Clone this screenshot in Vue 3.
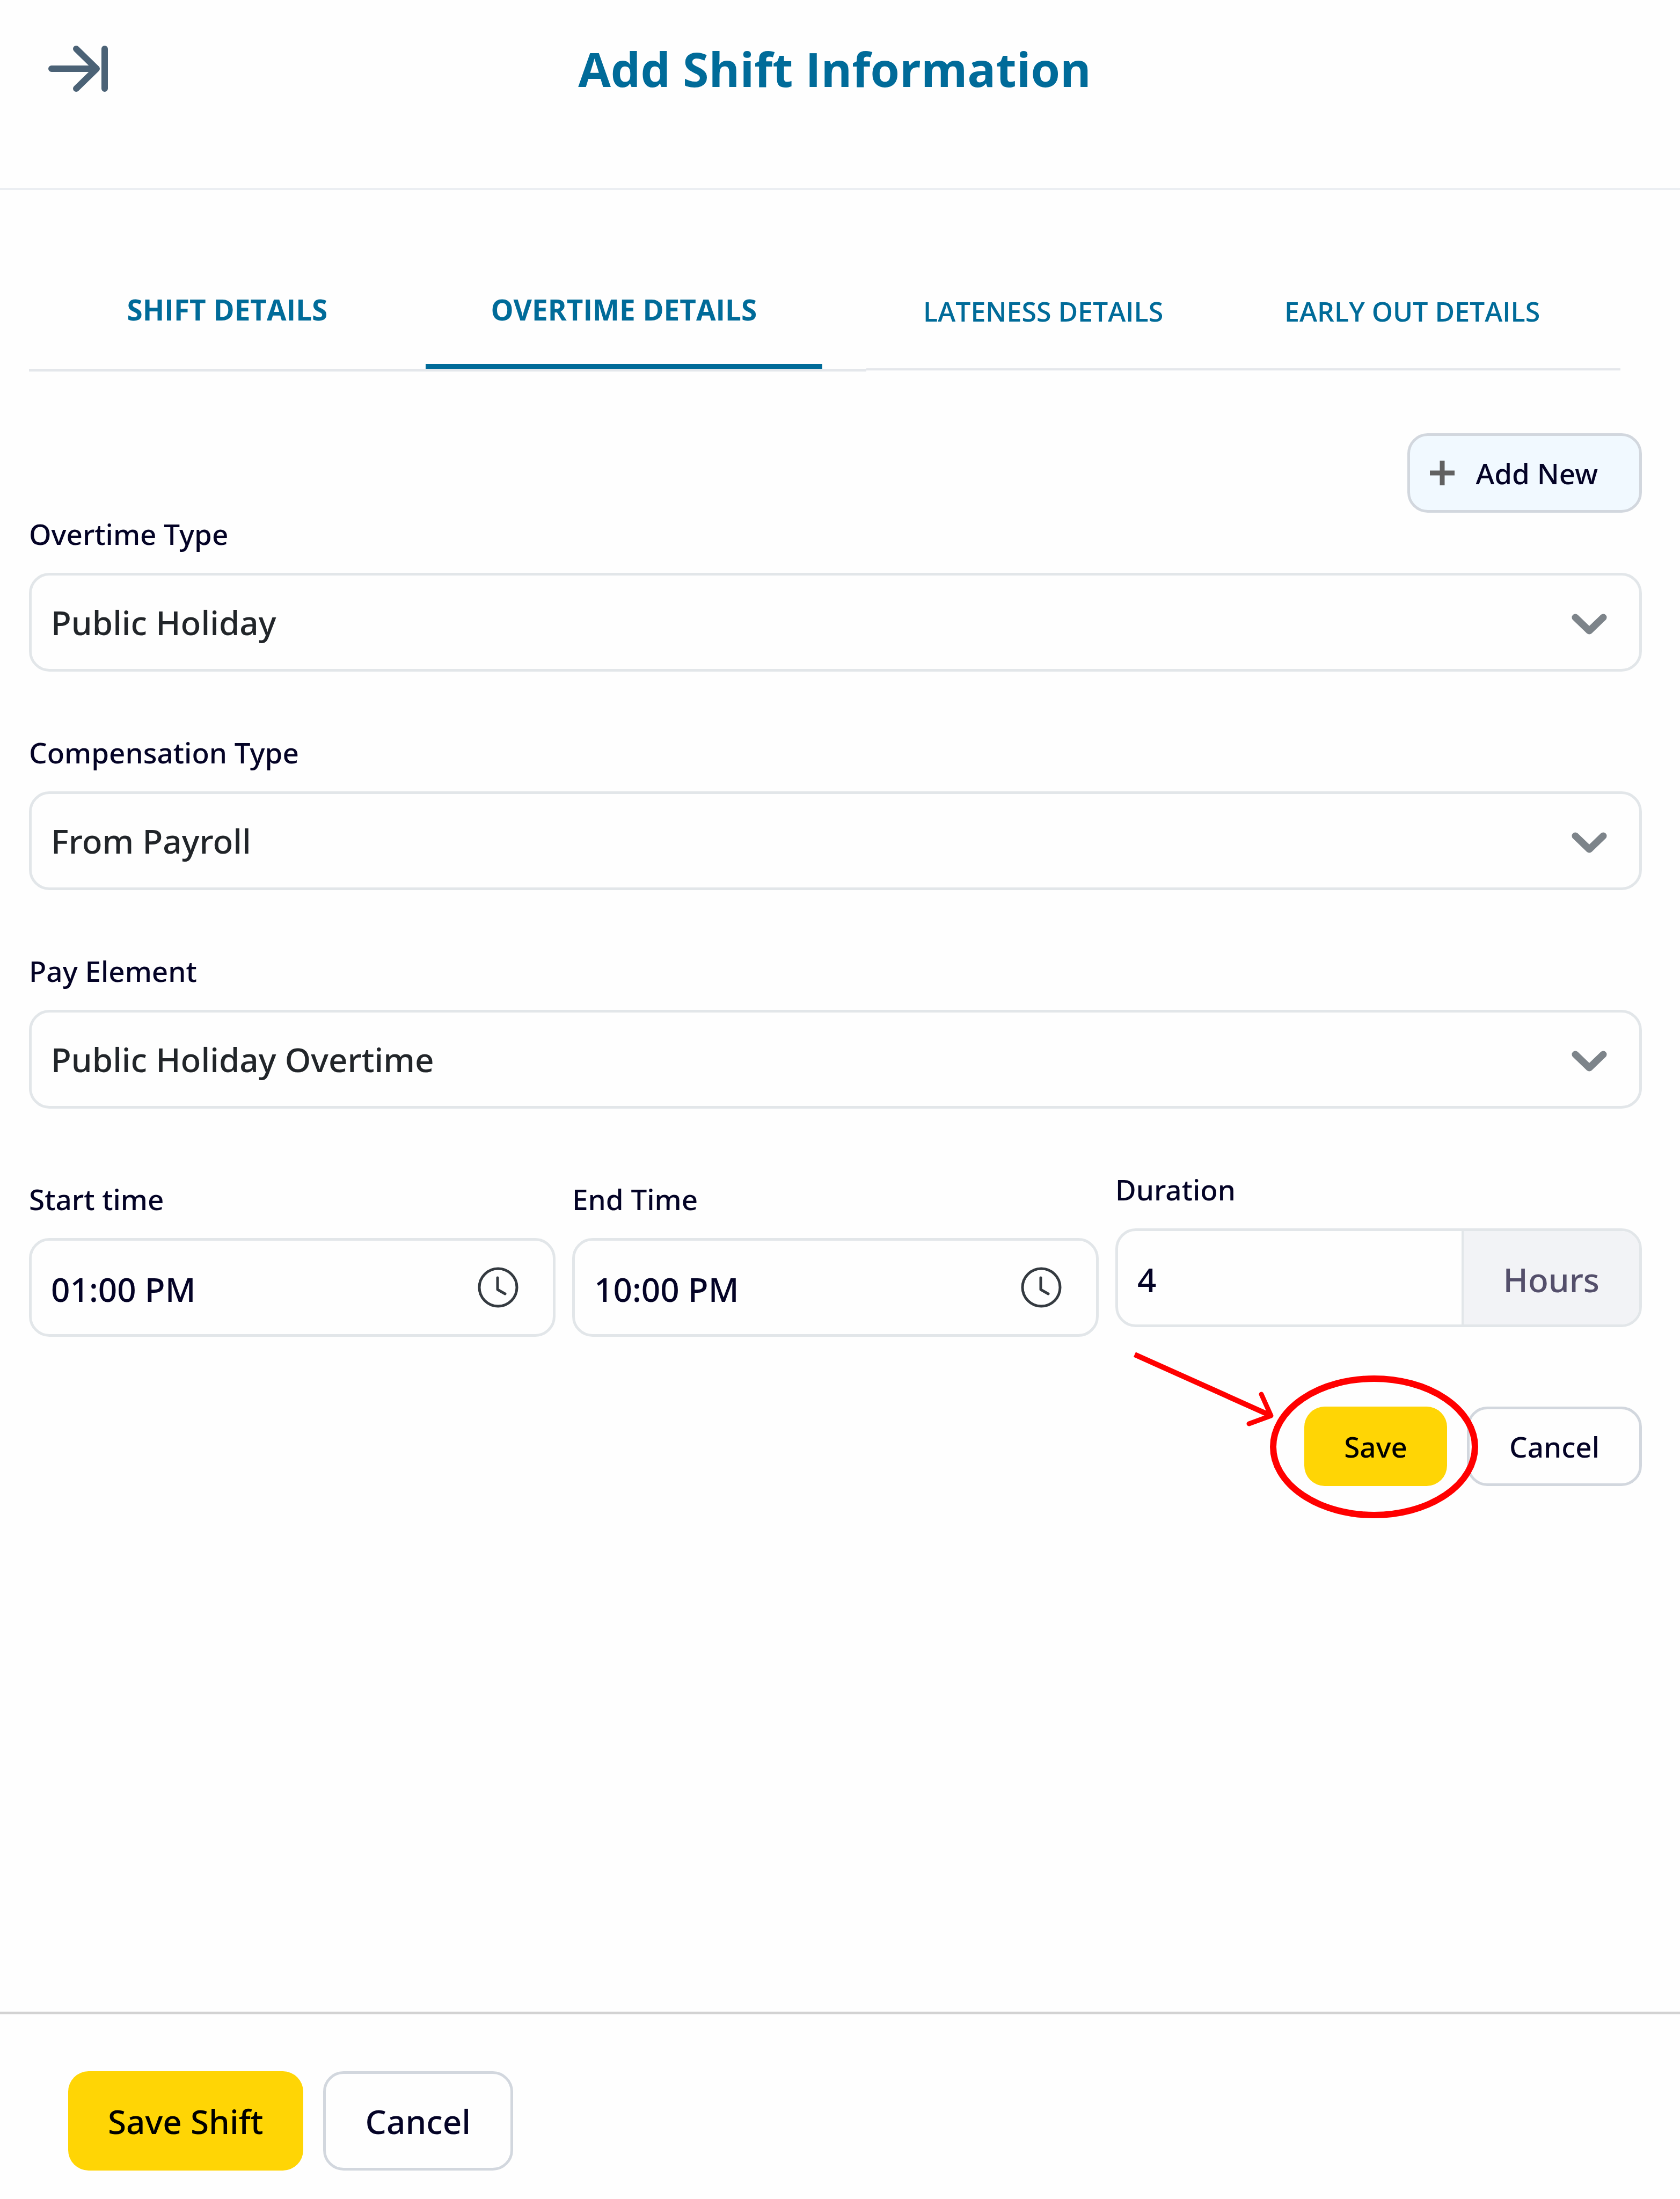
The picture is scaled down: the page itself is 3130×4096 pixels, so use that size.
<script setup>
import { ref } from 'vue'

const fields = ref([
  { id: 'overtime-type', label: 'Overtime Type', value: 'Public Holiday' },
  { id: 'compensation-type', label: 'Compensation Type', value: 'From Payroll' },
  { id: 'pay-element', label: 'Pay Element', value: 'Public Holiday Overtime' },
])
const times = ref([
  { id: 'start-time', label: 'Start time', value: '01:00 PM' },
  { id: 'end-time', label: 'End Time', value: '10:00 PM' },
])
const duration = ref('4')
const mainTabs = ['SHIFT DETAILS', 'OVERTIME DETAILS']
const moreTabs = ['LATENESS DETAILS', 'EARLY OUT DETAILS']
const active = ref('OVERTIME DETAILS')
</script>

<template>
  <div class="panel">
    <header class="header">
      <button class="collapse" type="button" aria-label="Close panel">
        <svg width="112" height="88" viewBox="0 0 112 88" fill="none" stroke="#4b6276" stroke-width="12" stroke-linecap="round" stroke-linejoin="round">
          <path d="M6 44H89M52 7L90 44L52 81M105 7V81" />
        </svg>
      </button>
      <h1 class="title">Add Shift Information</h1>
    </header>

    <nav class="tabs">
      <div class="tab-group">
        <button v-for="t in mainTabs" :key="t" type="button" class="tab" :class="{ active: t === active }" @click="active = t">{{ t }}</button>
      </div>
      <div class="tab-group more">
        <button v-for="t in moreTabs" :key="t" type="button" class="tab" :class="{ active: t === active }" @click="active = t">{{ t }}</button>
      </div>
    </nav>

    <main class="content">
      <div class="toolbar">
        <button class="btn add" type="button">
          <svg width="46" height="46" viewBox="0 0 46 46" stroke="#616161" stroke-width="9"><path d="M0 23H46M23 0V46" /></svg>
          Add New
        </button>
      </div>

      <form class="form" @submit.prevent>
        <div v-for="f in fields" :key="f.id" class="field">
          <label :for="f.id">{{ f.label }}</label>
          <div class="box">
            <select :id="f.id" v-model="f.value">
              <option>{{ f.value }}</option>
            </select>
            <svg class="chevron" width="66" height="48" viewBox="0 0 66 48" fill="none" stroke="#7d848a" stroke-width="13" stroke-linecap="round" stroke-linejoin="round">
              <path d="M7 15L33 40L59 15" />
            </svg>
          </div>
        </div>

        <div class="row">
          <div v-for="t in times" :key="t.id" class="field time">
            <label :for="t.id">{{ t.label }}</label>
            <div class="box">
              <input :id="t.id" v-model="t.value" type="text" />
              <svg class="clock" width="76" height="76" viewBox="0 0 76 76" fill="none" stroke="#343a40" stroke-width="5" stroke-linecap="round" stroke-linejoin="round">
                <circle cx="38" cy="38" r="35" />
                <path d="M37 20V42L51 50" />
              </svg>
            </div>
          </div>
          <div class="field">
            <label for="duration">Duration</label>
            <div class="box">
              <input id="duration" v-model="duration" type="text" />
              <span class="unit">Hours</span>
            </div>
          </div>
        </div>

        <div class="actions">
          <div class="callout">
            <button class="btn primary" type="submit">Save</button>
            <svg class="mark" width="660" height="330" viewBox="0 0 660 330" fill="none" stroke="#ff0000" aria-hidden="true">
              <path d="M8 12L262 126" stroke-width="10" />
              <path d="M244 86L262 126L221 141" stroke-width="9" stroke-linecap="round" stroke-linejoin="round" />
              <ellipse cx="454" cy="184" rx="188" ry="127" stroke-width="12" />
            </svg>
          </div>
          <button class="btn" type="button">Cancel</button>
        </div>
      </form>
    </main>

    <footer class="footer">
      <button class="btn large primary" type="button">Save Shift</button>
      <button class="btn large" type="button">Cancel</button>
    </footer>
  </div>
</template>

<style>
body {
  margin: 0;
  background: #fefefe;
}
</style>

<style scoped>
.panel,
.panel * {
  box-sizing: border-box;
}
.panel {
  display: flex;
  flex-direction: column;
  min-height: 100vh;
  font-family: "Noto Sans", "Open Sans", sans-serif;
  font-weight: 500;
  color: #040326;
}
svg {
  display: block;
  flex: none;
}
button,
input,
select {
  font: inherit;
  color: inherit;
  margin: 0;
  padding: 0;
  border: 0;
  background: none;
}
.header {
  display: grid;
  grid-template-columns: 1fr auto 1fr;
  align-items: center;
  padding: 64px 110px 158px 90px;
  border-bottom: 4px solid #ebeef2;
}
.collapse {
  justify-self: start;
}
.title {
  margin: 0;
  font-family: "Open Sans", "Noto Sans", sans-serif;
  font-size: 88px;
  line-height: 128px;
  font-weight: 700;
  color: #006b99;
}
.tabs {
  display: grid;
  grid-template-columns: minmax(0, 111fr) minmax(0, 100fr);
  align-items: start;
  padding: 0 111px 0 54px;
  font-family: "Open Sans", "Noto Sans", sans-serif;
}
.tab-group {
  display: flex;
  padding: 195px 82px 0 0;
  border-bottom: 5px solid #e4e7eb;
}
.tab {
  flex: 1 1 0;
  padding-bottom: 73px;
  border-bottom: 9px solid transparent;
  font-size: 53px;
  line-height: 56px;
  font-weight: 700;
  color: #006b99;
  white-space: nowrap;
}
.tab.active {
  border-bottom-color: #006b99;
}
.more {
  gap: 28px;
  padding: 198px 58px 0 0;
  border-bottom-width: 4px;
}
.more .tab {
  padding-bottom: 69px;
  font-size: 50px;
  font-weight: 600;
}
.content {
  padding: 115px 71px 0 54px;
}
.toolbar,
.actions {
  display: flex;
  justify-content: flex-end;
  gap: 37px;
}
.form {
  display: flex;
  flex-direction: column;
  gap: 111px;
}
.field label {
  display: block;
  margin-bottom: 32px;
  font-size: 53px;
  line-height: 80px;
}
.box {
  position: relative;
  display: flex;
  align-items: center;
  height: 184px;
  border: 5px solid #e2e6e9;
  border-radius: 38px;
  overflow: hidden;
  font-size: 62px;
}
.box select,
.box input {
  flex: 1;
  width: 100%;
  min-width: 0;
  height: 100%;
  padding: 0 36px;
  appearance: none;
  outline: none;
}
.box input {
  padding-top: 6px;
}
.box select {
  color: #212529;
}
.chevron {
  position: absolute;
  right: 60px;
  pointer-events: none;
}
.clock {
  margin-right: 64px;
}
.row {
  display: grid;
  grid-template-columns: repeat(3, 1fr);
  gap: 31px;
}
.time {
  padding-top: 18px;
}
.unit {
  display: flex;
  align-items: center;
  height: 100%;
  padding: 6px 74px 0;
  border-left: 4px solid #e2e6e9;
  background: #f2f3f6;
  color: #544f6b;
}
.actions {
  margin-top: 19px;
}
.btn {
  display: flex;
  align-items: center;
  justify-content: center;
  height: 148px;
  padding: 0 74px;
  border: 5px solid #d2d7de;
  border-radius: 38px;
  font-size: 53px;
  white-space: nowrap;
}
.primary {
  border: 0;
  background: #ffd505;
  color: #000;
}
.add {
  gap: 40px;
  padding: 0 77px 0 37px;
  background: #f1f9ff;
}
.callout {
  position: relative;
}
.mark {
  position: absolute;
  left: -324px;
  top: -109px;
  pointer-events: none;
}
.footer {
  display: flex;
  gap: 37px;
  margin-top: auto;
  padding: 106px 127px 53px;
  border-top: 5px solid #d2d2d2;
}
.large {
  height: 185px;
  font-size: 62px;
}
</style>
